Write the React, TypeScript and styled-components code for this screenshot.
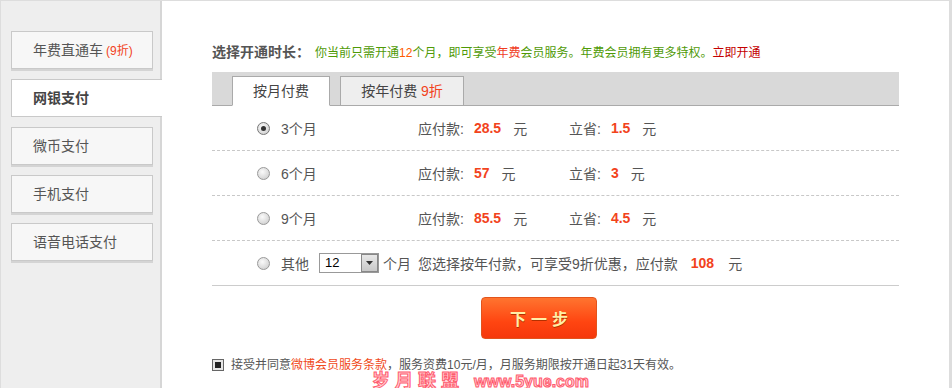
import React from 'react';
import styled, { createGlobalStyle } from 'styled-components';

const GlobalStyle = createGlobalStyle`
  html, body {
    margin: 0;
    padding: 0;
    background: #fff;
  }
  body {
    font-family: "Liberation Sans", "Noto Sans CJK SC", sans-serif;
    color: #555;
  }
`

const Page = styled.div`
  position: relative;
  display: flex;
  width: 952px;
  height: 388px;
  overflow: hidden;
  border-top: 1px solid #ddd;
  box-sizing: border-box;
`

const Sidebar = styled.div`
  width: 162px;
  flex-shrink: 0;
  box-sizing: border-box;
  background: #eee;
  border-left: 1px solid #ddd;
  border-right: 2px solid #d6d6d6;
  padding: 30px 0 0 10px;
  display: flex;
  flex-direction: column;
  gap: 10px;
`

const NavItem = styled.div<{ $active?: boolean }>`
  position: relative;
  box-sizing: border-box;
  height: 38px;
  width: ${p => (p.$active ? '151px' : '142px')};
  padding-left: 21px;
  line-height: 36px;
  font-size: 14px;
  color: ${p => (p.$active ? '#444' : '#555')};
  font-weight: ${p => (p.$active ? 'bold' : 'normal')};
  background: ${p => (p.$active ? '#fff' : '#f7f7f7')};
  border: 1px solid #c9c9c9;
  border-right: ${p => (p.$active ? 'none' : '1px solid #c9c9c9')};
  box-shadow: ${p => (p.$active ? 'none' : '0 2px 0 #d4d4d4')};
`

const Discount = styled.span`
  font-size: 12px;
  color: #f2431c;
  margin-left: 3px;
`

const Main = styled.div`
  flex: 1;
  box-sizing: border-box;
  border-right: 3px solid #ddd;
  padding: 41px 50px 0 50px;
`

const Heading = styled.div`
  line-height: 20px;
  white-space: nowrap;
`

const HeadTitle = styled.span`
  font-size: 14px;
  font-weight: bold;
  color: #555;
`

const Hint = styled.span`
  font-size: 12px;
  color: #4f9a06;
  margin-left: 5px;
`

const Mark = styled.span<{ $color: string }>`
  color: ${p => p.$color};
`

const TabBar = styled.div`
  margin-top: 9px;
  height: 34px;
  box-sizing: border-box;
  background: #d9d9d9;
  border-bottom: 1px solid #aaa;
  display: flex;
  align-items: flex-end;
  padding-left: 20px;
  gap: 10px;
`

const Tab = styled.div<{ $active?: boolean; $w: number }>`
  box-sizing: border-box;
  width: ${p => p.$w}px;
  height: 30px;
  margin-bottom: -1px;
  text-align: center;
  line-height: 28px;
  font-size: 14px;
  color: #444;
  background: ${p => (p.$active ? '#fff' : '#eee')};
  border: 1px solid #aaa;
  border-bottom-color: ${p => (p.$active ? '#fff' : '#aaa')};
`

const Row = styled.div<{ $last?: boolean }>`
  display: flex;
  align-items: center;
  height: 45px;
  box-sizing: border-box;
  padding-left: 45px;
  font-size: 14px;
  color: #555;
  white-space: nowrap;
  border-bottom: 1px ${p => (p.$last ? 'solid #ccc' : 'dashed #c8c8c8')};
`

const Radio = styled.span<{ $checked?: boolean }>`
  position: relative;
  display: inline-block;
  width: 13px;
  height: 13px;
  box-sizing: border-box;
  border-radius: 50%;
  border: 1px solid ${p => (p.$checked ? '#777' : '#999')};
  background: radial-gradient(circle at 40% 35%, #fafafa 0%, #dcdcdc 60%, #c4c4c4 100%);
  margin-right: 11px;
  &::after {
    content: '';
    display: ${p => (p.$checked ? 'block' : 'none')};
    position: absolute;
    left: 3px;
    top: 3px;
    width: 5px;
    height: 5px;
    border-radius: 50%;
    background: #333;
  }
`

const ChoiceCell = styled.div`
  width: 161px;
  display: flex;
  align-items: center;
`

const PayCell = styled.div<{ $w?: number; $ml?: number }>`
  width: ${p => (p.$w ? `${p.$w}px` : 'auto')};
  margin-left: ${p => p.$ml ?? 0}px;
  display: flex;
  align-items: center;
`

const Amount = styled.span<{ $ml?: number; $mr?: number }>`
  font-weight: bold;
  color: #f2431c;
  margin: 0 ${p => p.$mr ?? 12}px 0 ${p => p.$ml ?? 10}px;
`

const Select = styled.div`
  display: flex;
  box-sizing: border-box;
  width: 60px;
  height: 20px;
  margin: 0 4px 0 10px;
  border: 1px solid #999;
  background: #fff;
`

const SelectValue = styled.span`
  flex: 1;
  padding-left: 5px;
  font-size: 13px;
  line-height: 18px;
  color: #000;
`

const SelectArrow = styled.span`
  width: 17px;
  display: flex;
  align-items: center;
  justify-content: center;
  box-sizing: border-box;
  border: 1px solid #888;
  background: linear-gradient(#e8e8e8, #c8c8c8);
`

const NextButton = styled.button`
  display: block;
  margin: 11px 0 0 269px;
  width: 116px;
  height: 42px;
  border: 1px solid #e2541c;
  border-radius: 4px;
  background: linear-gradient(#ff742f, #ff4511 60%, #f5380b);
  color: #fff0a8;
  font-family: "Liberation Sans", "Noto Sans CJK SC", sans-serif;
  font-size: 16px;
  font-weight: bold;
  letter-spacing: 5px;
  text-indent: 5px;
  text-shadow: 0 1px 0 #b43000;
`

const Agreement = styled.div`
  display: flex;
  align-items: center;
  margin-top: 18px;
  font-size: 12px;
  line-height: 16px;
  color: #555;
  white-space: nowrap;
`

const CheckBox = styled.span`
  display: inline-block;
  box-sizing: border-box;
  width: 12px;
  height: 12px;
  margin-right: 7px;
  border: 1px solid #666;
  background: #e6e6e6;
  padding: 2px;
  &::after {
    content: '';
    display: block;
    width: 6px;
    height: 6px;
    background: #222;
  }
`

const Watermark = styled.div`
  position: absolute;
  left: 372px;
  top: 369px;
  font-size: 16px;
  line-height: 22px;
  font-weight: bold;
  color: #ffd0d4;
  -webkit-text-stroke: 1px #ff5a6e;
  white-space: nowrap;
`

const WaterCn = styled.span`
  font-size: 18px;
  letter-spacing: 5px;
  margin-right: 10px;
`

const rows = [
  { months: 3, pay: '28.5', save: '1.5', checked: true },
  { months: 6, pay: '57', save: '3' },
  { months: 9, pay: '85.5', save: '4.5' },
]

export default function App() {
  return (
    <>
      <GlobalStyle />
      <Page>
        <Sidebar>
          <NavItem>年费直通车<Discount>(9折)</Discount></NavItem>
          <NavItem $active>网银支付</NavItem>
          <NavItem>微币支付</NavItem>
          <NavItem>手机支付</NavItem>
          <NavItem>语音电话支付</NavItem>
        </Sidebar>
        <Main>
          <Heading>
            <HeadTitle>选择开通时长：</HeadTitle>
            <Hint>
              你当前只需开通<Mark $color="#ff5a00">12</Mark>个月，即可享受<Mark $color="#f03c1e">年费</Mark>会员服务。年费会员拥有更多特权。<Mark $color="#c40000">立即开通</Mark>
            </Hint>
          </Heading>
          <TabBar>
            <Tab $active $w={98}>按月付费</Tab>
            <Tab $w={124}>按年付费 <Mark $color="#f2431c">9折</Mark></Tab>
          </TabBar>
          {rows.map(r => (
            <Row key={r.months}>
              <ChoiceCell>
                <Radio $checked={r.checked} />
                {r.months}个月
              </ChoiceCell>
              <PayCell $w={151}>
                应付款:<Amount>{r.pay}</Amount>元
              </PayCell>
              <PayCell>
                立省:<Amount>{r.save}</Amount>元
              </PayCell>
            </Row>
          ))}
          <Row $last>
            <Radio />
            其他
            <Select>
              <SelectValue>12</SelectValue>
              <SelectArrow>
                <svg width="7" height="4" viewBox="0 0 7 4">
                  <path d="M0 0h7L3.5 4z" fill="#333" />
                </svg>
              </SelectArrow>
            </Select>
            个月
            <PayCell $ml={7}>
              您选择按年付款，可享受9折优惠，应付款<Amount $ml={13} $mr={14}>108</Amount>元
            </PayCell>
          </Row>
          <NextButton>下一步</NextButton>
          <Agreement>
            <CheckBox />
            接受并同意<Mark $color="#f04a1a">微博会员服务条款</Mark>，服务资费10元/月，月服务期限按开通日起31天有效。
          </Agreement>
        </Main>
        <Watermark>
          <WaterCn>岁月联盟</WaterCn>www.5yue.com
        </Watermark>
      </Page>
    </>
  );
}
